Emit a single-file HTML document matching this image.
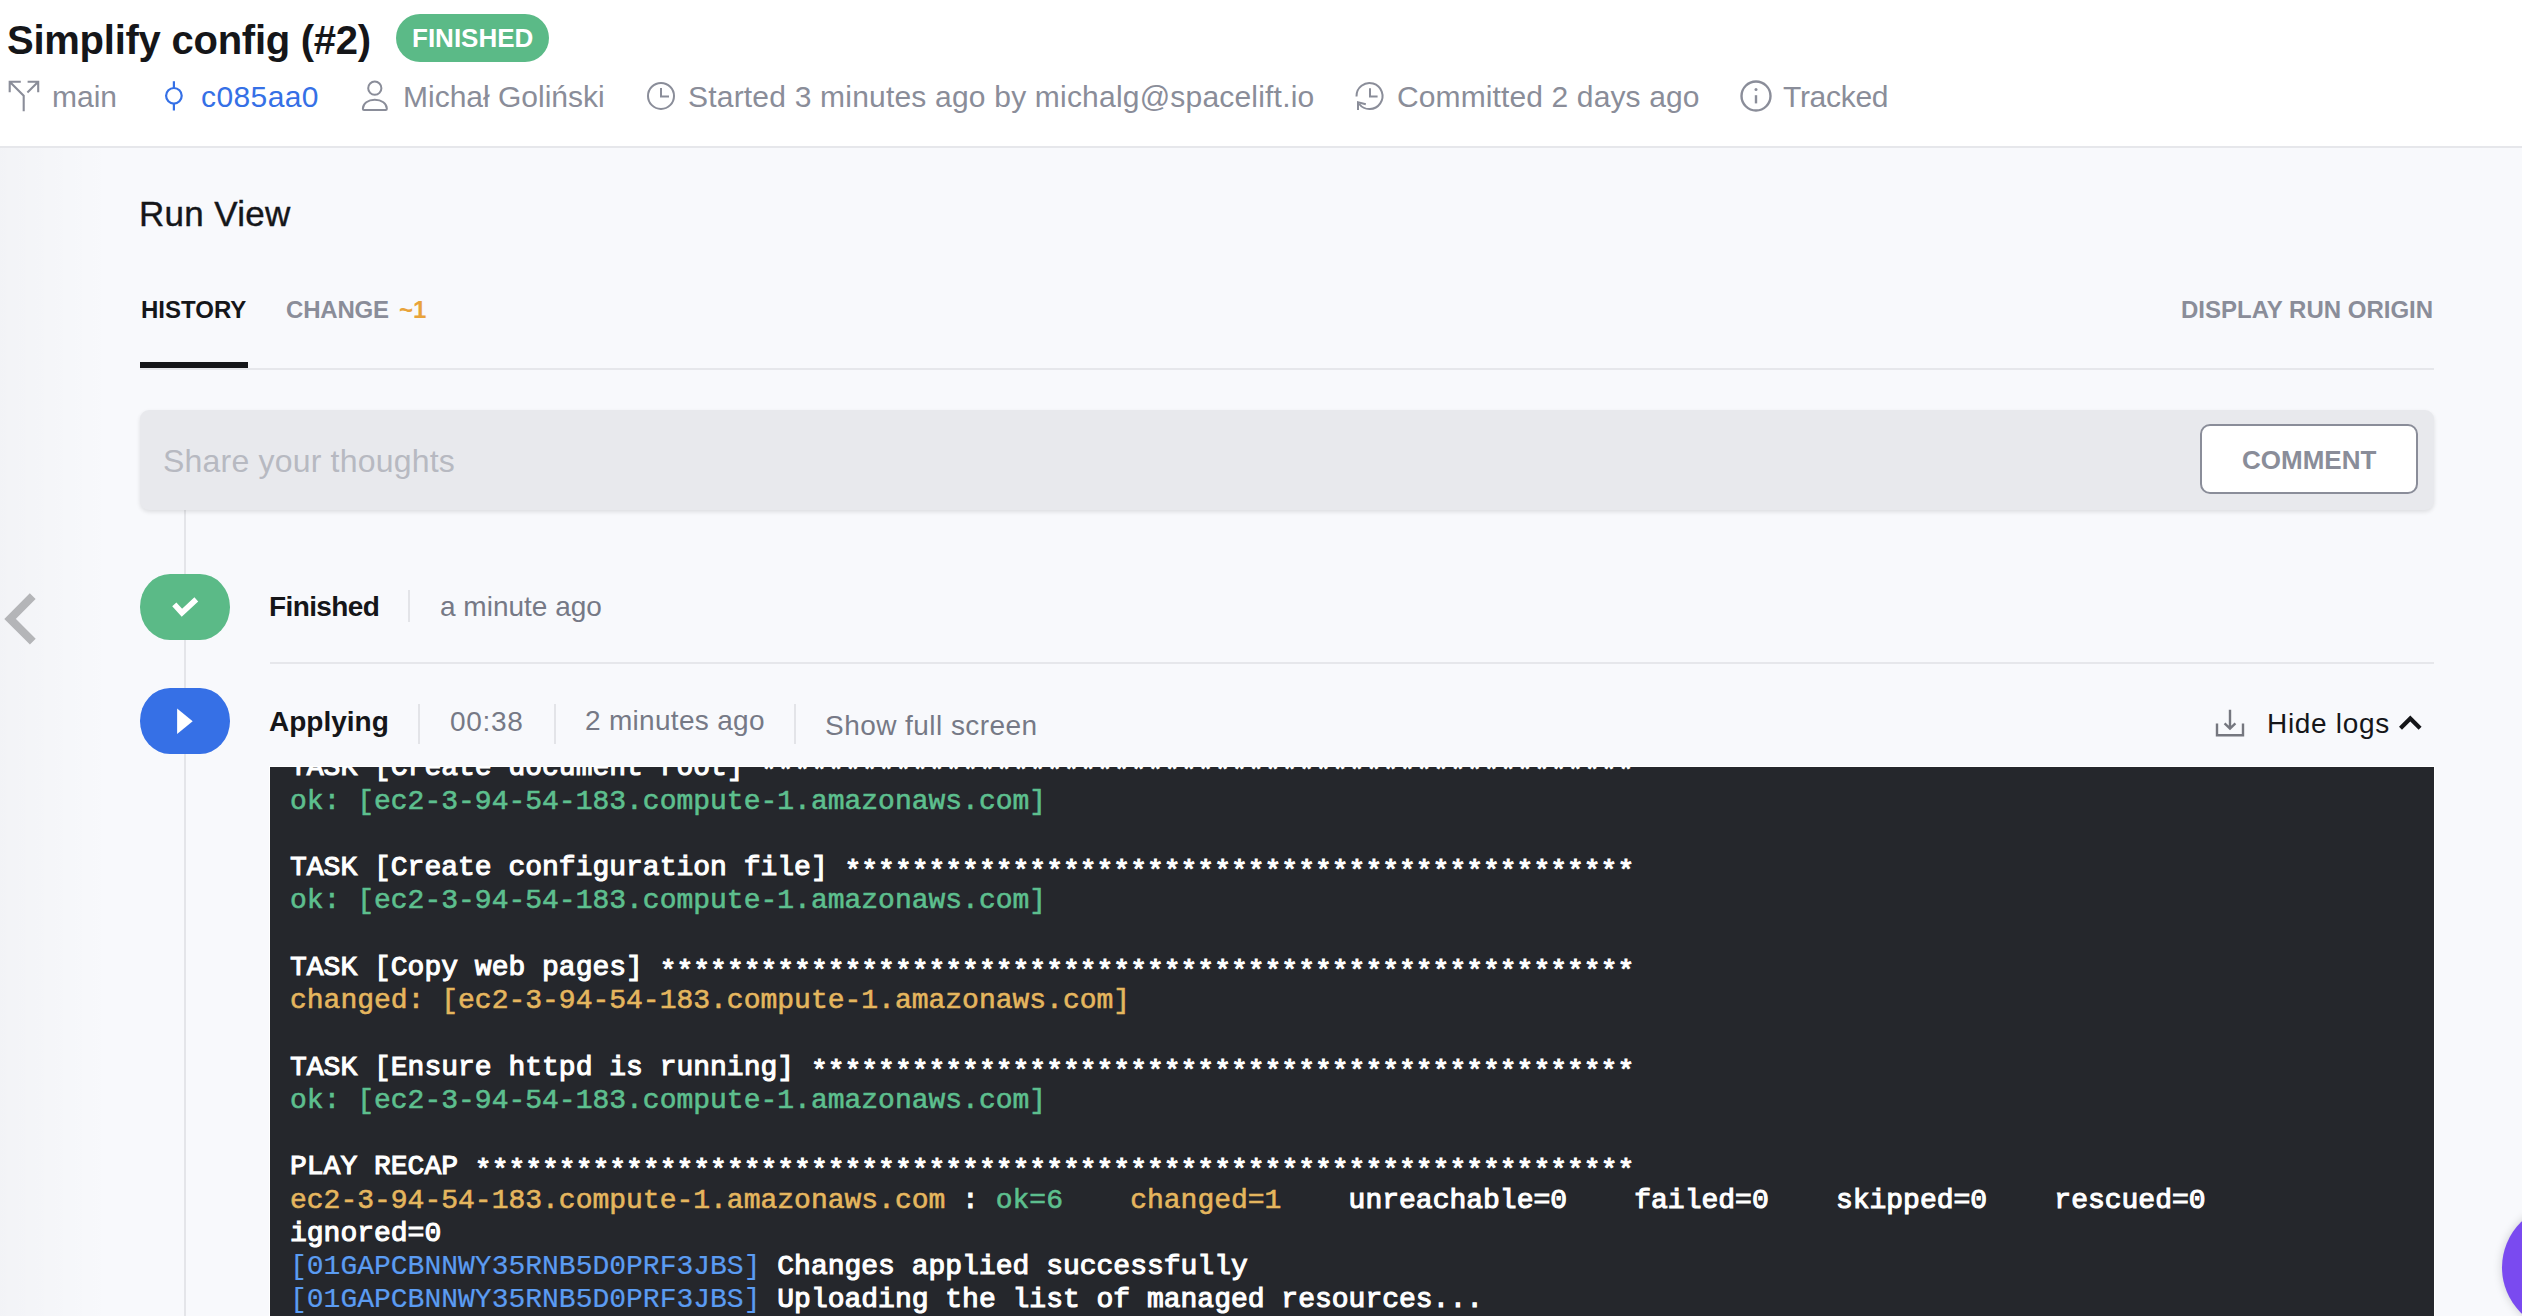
<!DOCTYPE html>
<html><head><meta charset="utf-8">
<style>
*{margin:0;padding:0;box-sizing:border-box}
html,body{width:2522px;height:1316px;overflow:hidden;background:#f8f9fc;font-family:"Liberation Sans",sans-serif}
.a{position:absolute;white-space:nowrap;line-height:1}
#hdr{position:absolute;left:0;top:0;width:2522px;height:148px;background:#fff;border-bottom:2px solid #e6e7eb}
.meta{font-size:30px;color:#8a8d99}
.sep{position:absolute;width:2px;background:#e3e4e8}
#log{position:absolute;left:270px;top:767px;width:2164px;height:549px;background:#25272c;overflow:hidden;outline:1px solid #fff}
#log pre{position:absolute;left:20px;top:-15.7px;font-family:"Liberation Mono",monospace;font-size:28px;line-height:33.25px;color:#fff;font-weight:normal;-webkit-text-stroke:1.1px #fff;white-space:pre}
.st{position:relative;top:4px}
.g{color:#5dbf8e;-webkit-text-stroke:0.6px #5dbf8e}.y{color:#e5b65e;-webkit-text-stroke:0.6px #e5b65e}.b{color:#5b9cf2;-webkit-text-stroke:0.2px #5b9cf2}
</style></head><body>
<div id="hdr"></div>
<div class="a" style="left:0;top:148px;width:110px;height:1168px;background:linear-gradient(90deg,rgba(0,0,20,0.022),rgba(0,0,20,0))"></div>
<div class="a" id="title" style="left:7px;top:20px;font-size:40px;font-weight:bold;color:#151619;letter-spacing:-0.25px">Simplify config (#2)</div>
<div class="a" style="left:396px;top:14px;width:153px;height:48px;border-radius:24px;background:#5bba87"></div>
<div class="a" id="badge" style="left:412px;top:25px;font-size:26px;font-weight:bold;color:#fff">FINISHED</div>

<div class="a meta" id="m1" style="left:52px;top:82px">main</div>
<div class="a meta" id="m2" style="left:201px;top:82px;color:#3570e6;letter-spacing:0.4px">c085aa0</div>
<div class="a meta" id="m3" style="left:403px;top:82px">Michał Goliński</div>
<div class="a meta" id="m4" style="left:688px;top:82px;letter-spacing:0.2px">Started 3 minutes ago by michalg@spacelift.io</div>
<div class="a meta" id="m5" style="left:1397px;top:82px;letter-spacing:0.12px">Committed 2 days ago</div>
<div class="a meta" id="m6" style="left:1783px;top:82px;letter-spacing:-0.3px">Tracked</div>

<div class="a" id="runview" style="left:139px;top:196px;font-size:35px;color:#151619;letter-spacing:0.3px;-webkit-text-stroke:0.4px #151619">Run View</div>
<div class="a" id="t1" style="left:141px;top:298px;font-size:24px;font-weight:bold;color:#151619">HISTORY</div>
<div class="a" id="t2" style="left:286px;top:298px;font-size:24px;font-weight:bold;color:#8a8d99;letter-spacing:-0.2px">CHANGE</div>
<div class="a" id="t3" style="left:399px;top:298px;font-size:24px;font-weight:bold;color:#e8a33a">~1</div>
<div class="a" id="t4" style="left:2181px;top:298px;font-size:24px;font-weight:bold;color:#8a8d99">DISPLAY RUN ORIGIN</div>
<div class="a" style="left:140px;top:368px;width:2294px;height:2px;background:#e6e7eb"></div>
<div class="a" style="left:140px;top:362px;width:108px;height:6px;background:#151619"></div>

<div class="a" style="left:184px;top:508px;width:2px;height:808px;background:#e4e5e9"></div>

<div class="a" style="left:140px;top:410px;width:2294px;height:100px;border-radius:9px;background:#e8e9ed;box-shadow:0 2px 4px rgba(0,0,0,0.11)"></div>
<div class="a" id="share" style="left:163px;top:445px;font-size:32px;color:#b7b9c1;letter-spacing:0.2px">Share your thoughts</div>
<div class="a" style="left:2200px;top:424px;width:218px;height:70px;border-radius:10px;background:#fff;border:2px solid #8a8d99"></div>
<div class="a" id="cbtn" style="left:2242px;top:447px;font-size:26px;font-weight:bold;color:#8a8d99">COMMENT</div>

<div class="a" style="left:140px;top:574px;width:90px;height:66px;border-radius:30px/33px;background:#5bba87"></div>
<div class="a" id="f1" style="left:269px;top:593px;font-size:28px;font-weight:bold;color:#151619;letter-spacing:-0.6px">Finished</div>
<div class="sep" style="left:408px;top:590px;height:32px"></div>
<div class="a" id="f2" style="left:440px;top:593px;font-size:28px;color:#767986">a minute ago</div>
<div class="a" style="left:270px;top:662px;width:2164px;height:2px;background:#e6e7eb"></div>

<div class="a" style="left:140px;top:688px;width:90px;height:66px;border-radius:30px/33px;background:#3670e6"></div>
<div class="a" id="p1" style="left:269px;top:708px;font-size:28px;font-weight:bold;color:#151619">Applying</div>
<div class="sep" style="left:418px;top:704px;height:40px"></div>
<div class="a" id="p2" style="left:450px;top:708px;font-size:28px;color:#767986;letter-spacing:0.7px">00:38</div>
<div class="sep" style="left:554px;top:704px;height:40px"></div>
<div class="a" id="p3" style="left:585px;top:707px;font-size:28px;color:#767986;letter-spacing:0.3px">2 minutes ago</div>
<div class="sep" style="left:794px;top:704px;height:40px"></div>
<div class="a" id="p4" style="left:825px;top:712px;font-size:28px;color:#767986;letter-spacing:0.45px">Show full screen</div>
<div class="a" id="p5" style="left:2267px;top:710px;font-size:28px;color:#151619;letter-spacing:0.7px">Hide logs</div>

<div id="log"><pre>TASK [Create document root] <span class="st">****************************************************</span>
<span class="g">ok: [ec2-3-94-54-183.compute-1.amazonaws.com]</span>

TASK [Create configuration file] <span class="st">***********************************************</span>
<span class="g">ok: [ec2-3-94-54-183.compute-1.amazonaws.com]</span>

TASK [Copy web pages] <span class="st">**********************************************************</span>
<span class="y">changed: [ec2-3-94-54-183.compute-1.amazonaws.com]</span>

TASK [Ensure httpd is running] <span class="st">*************************************************</span>
<span class="g">ok: [ec2-3-94-54-183.compute-1.amazonaws.com]</span>

PLAY RECAP <span class="st">*********************************************************************</span>
<span class="y">ec2-3-94-54-183.compute-1.amazonaws.com</span> : <span class="g">ok=6</span>    <span class="y">changed=1</span>    unreachable=0    failed=0    skipped=0    rescued=0
ignored=0
<span class="b">[01GAPCBNNWY35RNB5D0PRF3JBS]</span> Changes applied successfully
<span class="b">[01GAPCBNNWY35RNB5D0PRF3JBS]</span> Uploading the list of managed resources...
</pre></div>

<svg style="position:absolute;left:0;top:0" width="2522" height="1316" fill="none">
 <!-- branch -->
 <g stroke="#8a8d99" stroke-width="2.1">
  <path d="M9.7 92.3V81.8H20.8M9.7 81.8L23.7 95.8V111.2M27.6 81.8H38.2V92.3M38.2 81.8L27.4 92.4"/>
 </g>
 <!-- commit -->
 <g stroke="#3570e6" stroke-width="2.2">
  <circle cx="173.9" cy="95.8" r="7.8"/>
  <path d="M173.9 81.2V88M173.9 103.6V110.5"/>
 </g>
 <!-- user -->
 <g stroke="#8a8d99" stroke-width="2">
  <circle cx="374.8" cy="88.2" r="6.6"/>
  <path d="M362.9 108.6C362.9 103.3 368 99.8 374.8 99.8C381.6 99.8 386.8 103.3 386.8 108.6V108.9Q386.8 110 385.7 110H364Q362.9 110 362.9 108.9Z"/>
 </g>
 <!-- clock -->
 <g stroke="#8a8d99" stroke-width="2">
  <circle cx="661" cy="95.9" r="13"/>
  <path d="M661 88V96.5H669"/>
 </g>
 <!-- history -->
 <g stroke="#8a8d99" stroke-width="2">
  <path d="M1356.5 96.5A13 13 0 1 1 1359.2 104"/>
  <path d="M1370 88.3V96.5H1377.6"/>
  <path d="M1358 110V102.2L1365.8 104.2"/>
 </g>
 <!-- info -->
 <g stroke="#8a8d99" stroke-width="2.4">
  <circle cx="1756" cy="96" r="14.5"/>
  <path d="M1756 95.2V103.4"/>
 </g>
 <circle cx="1756" cy="89.4" r="1.5" fill="#8a8d99"/>
 <!-- chevron left -->
 <path d="M32.7 596.2L10.1 618.9L32.8 641.6" stroke="#b4b5b8" stroke-width="8.2"/>
 <!-- check -->
 <path d="M174.3 604.3L181.9 612.7L196.3 599.4" stroke="#fff" stroke-width="5.6"/>
 <!-- play -->
 <path d="M177.1 708.5V734L192.7 721.2Z" fill="#fff"/>
 <!-- download -->
 <g stroke="#75777f" stroke-width="2.4">
  <path d="M2217 723.5V735.3H2243V723.5"/>
  <path d="M2230 709.7V728.4M2224.6 723.3L2230 728.6L2235.4 723.3"/>
 </g>
 <!-- caret up -->
 <path d="M2400.5 728.3L2410.3 718.5L2420.1 728.3" stroke="#151619" stroke-width="4.2"/>
</svg>

<div class="a" style="left:2502px;top:1204px;width:127px;height:127px;border-radius:50%;background:#7a4af0;box-shadow:0 0 10px rgba(0,0,0,0.18)"></div>
</body></html>
